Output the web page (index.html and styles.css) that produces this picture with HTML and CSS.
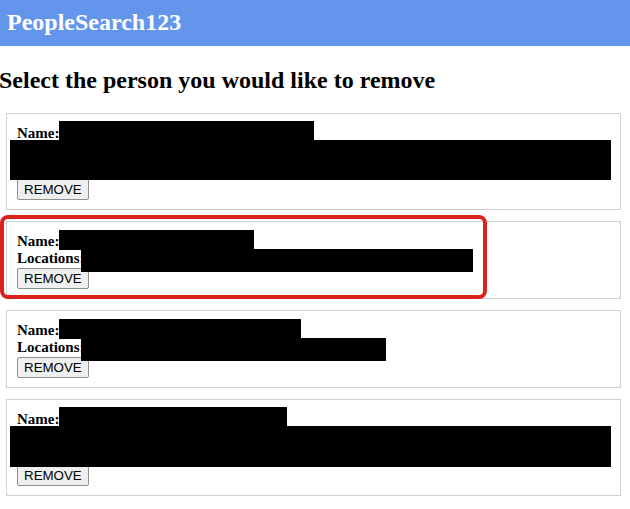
FILE: index.html
```html
<!DOCTYPE html>
<html lang="en">
<head>
<meta charset="utf-8">
<title>PeopleSearch123</title>
<link rel="stylesheet" href="styles.css">
</head>
<body>
<header class="topbar">
  <div class="brand">PeopleSearch123</div>
</header>
<h2 class="title">Select the person you would like to remove</h2>
<div class="list">
  <div class="card">
    <div class="line"><b>Name:</b> Redacted Person</div>
    <div class="line wrap"><b>Locations:</b> Redacted location list, redacted location list, redacted location list, redacted location list, more</div>
    <button class="btn">REMOVE</button>
    <span class="redact" style="left:52px;top:7px;width:255px;height:20px"></span>
    <span class="redact" style="left:3px;top:26px;width:601px;height:40px"></span>
  </div>
  <div class="card highlighted">
    <div class="line"><b>Name:</b> Redacted Person</div>
    <div class="line"><b>Locations:</b> Redacted location</div>
    <button class="btn">REMOVE</button>
    <span class="redact" style="left:52px;top:8px;width:195px;height:20px"></span>
    <span class="redact" style="left:74px;top:27px;width:392px;height:23px"></span>
    <span class="ring"></span>
  </div>
  <div class="card">
    <div class="line"><b>Name:</b> Redacted Person</div>
    <div class="line"><b>Locations:</b> Redacted location</div>
    <button class="btn">REMOVE</button>
    <span class="redact" style="left:52px;top:8px;width:242px;height:20px"></span>
    <span class="redact" style="left:74px;top:27px;width:305px;height:23px"></span>
  </div>
  <div class="card">
    <div class="line"><b>Name:</b> Redacted Person</div>
    <div class="line wrap"><b>Locations:</b> Redacted location list, redacted location list, redacted location list, redacted location list, more</div>
    <button class="btn">REMOVE</button>
    <span class="redact" style="left:52px;top:7px;width:228px;height:20px"></span>
    <span class="redact" style="left:3px;top:26px;width:601px;height:41px"></span>
  </div>
</div>
</body>
</html>
```

FILE: styles.css
```css
html, body {
  margin: 0;
  padding: 0;
  background: #ffffff;
  font-family: "Liberation Serif", "Times New Roman", serif;
  color: #000000;
}

.topbar {
  height: 46px;
  background: #6495ed;
  display: flex;
  align-items: center;
  padding-left: 7px;
}

.brand {
  color: #ffffff;
  font-weight: bold;
  font-size: 24px;
  line-height: 28px;
  margin-top: -2px;
}

.title {
  margin: 20px 0 0 -1px;
  font-size: 24px;
  font-weight: bold;
  line-height: 28px;
}

.list {
  display: flex;
  flex-direction: column;
  gap: 11px;
  margin: 19px 9px 0 6px;
}

.card {
  position: relative;
  border: 1px solid #d0d0d0;
  padding: 11px 10px 9px;
  font-size: 15px;
  line-height: 17px;
}

.line {
  overflow: hidden;
}

.line.wrap {
  height: 36px;
  line-height: 18px;
}

.btn {
  display: block;
  margin-top: 1px;
  height: 21px;
  padding: 0 6px;
  font-family: "Liberation Sans", Arial, sans-serif;
  font-size: 13.33px;
  color: #000;
  background: #efefef;
  border: 1px solid #8f8f8f;
  border-radius: 2px;
}

.redact {
  position: absolute;
  background: #000000;
}

.ring {
  position: absolute;
  left: -7px;
  top: -7px;
  width: 479px;
  height: 76px;
  border: 4px solid #d9231d;
  border-radius: 8px;
  pointer-events: none;
}
```
